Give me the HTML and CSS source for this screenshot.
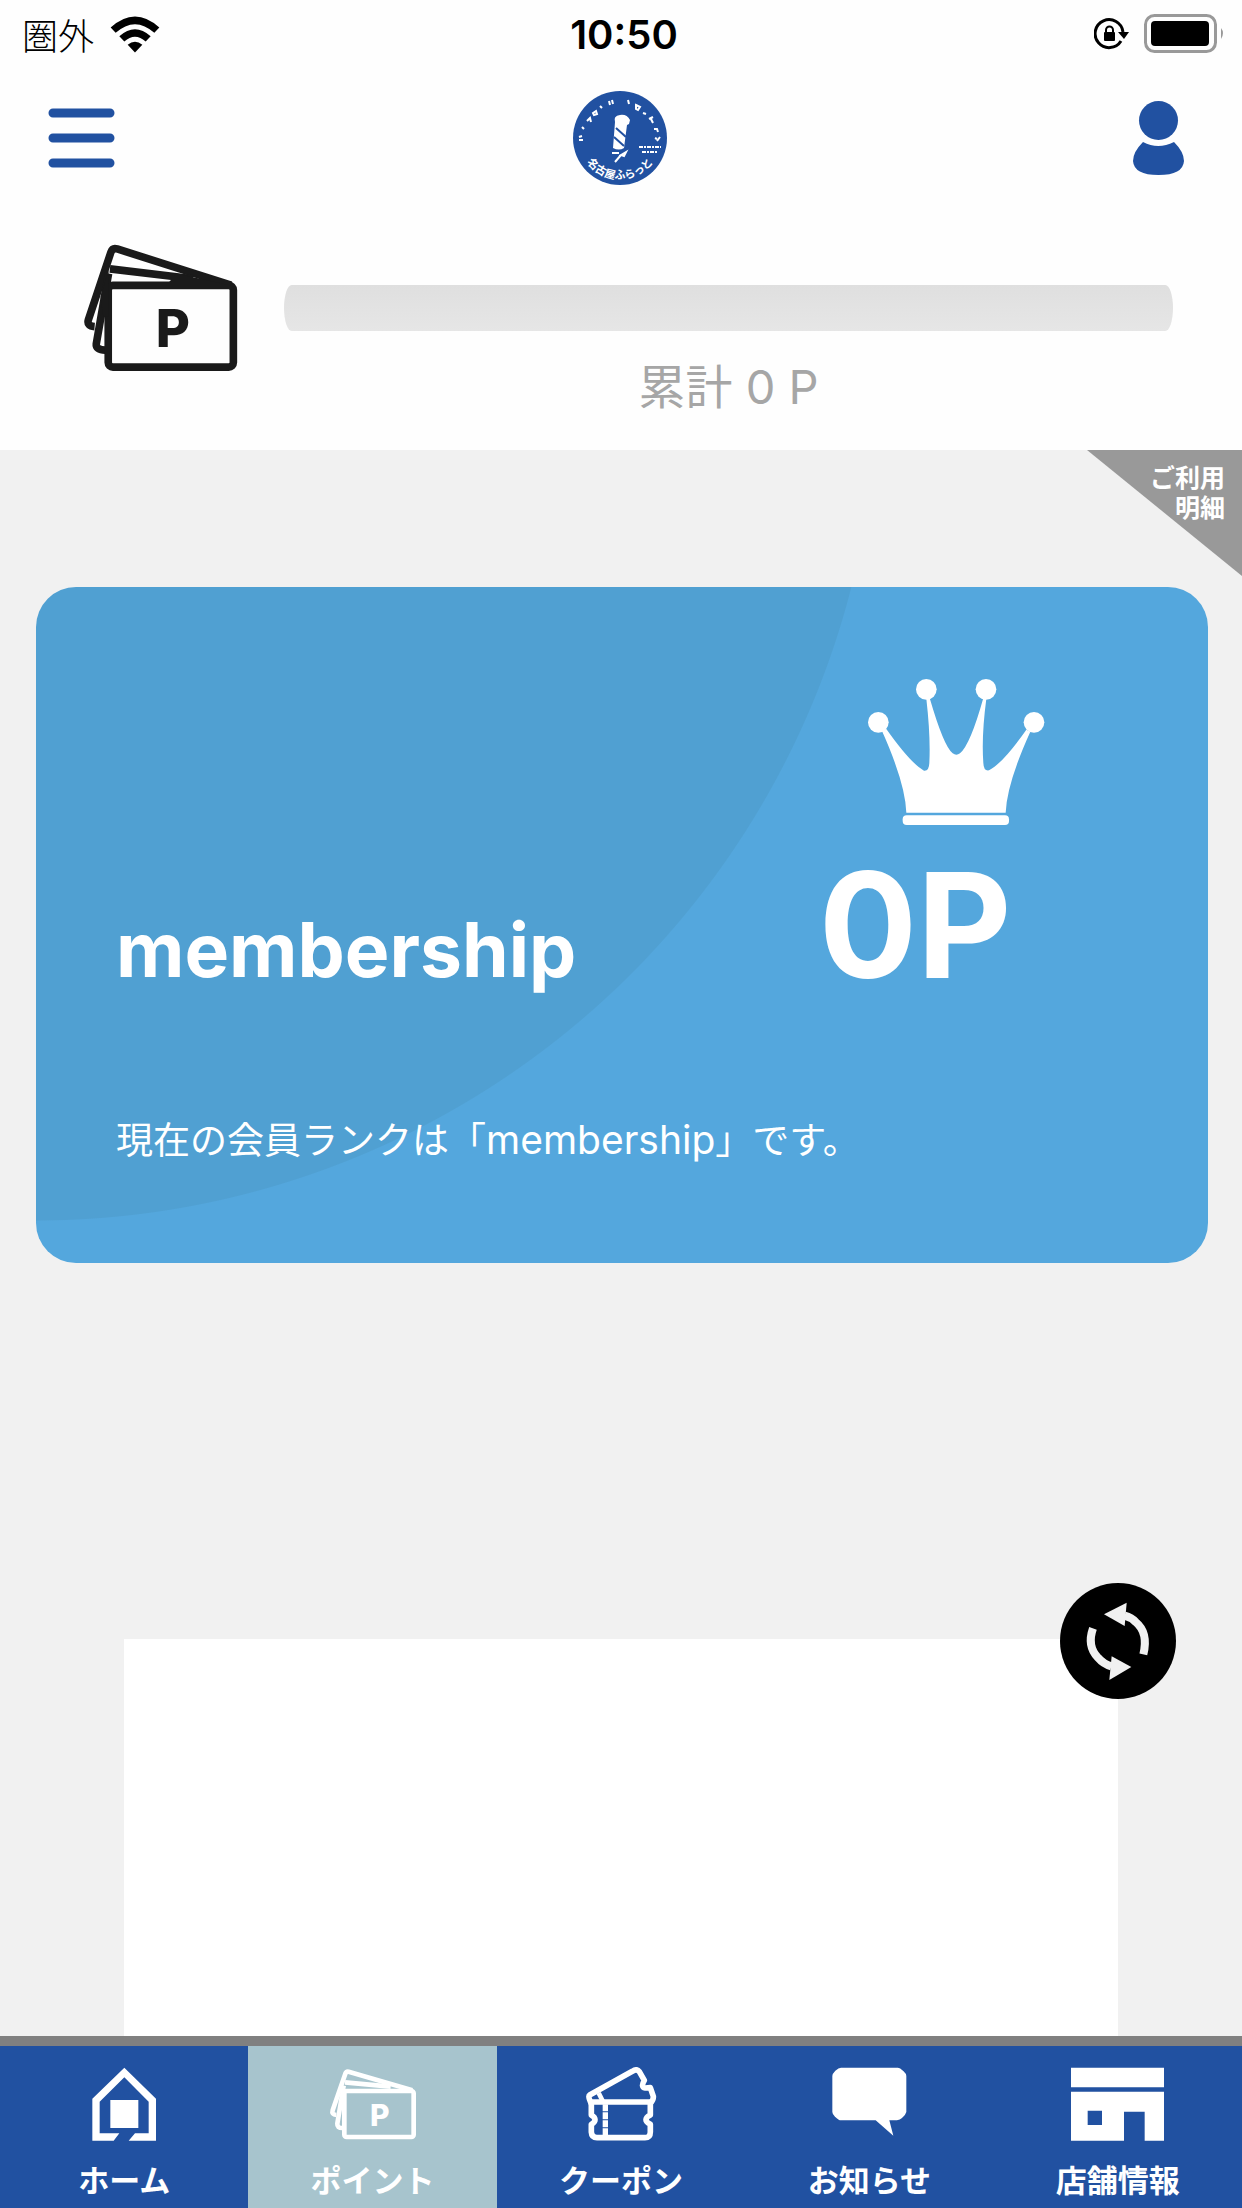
FILE: index.html
```html
<!DOCTYPE html>
<html lang="ja">
<head>
    <meta charset="UTF-8">
    <meta name="viewport" content="width=device-width, initial-scale=1.0">
    <title>ポイント</title>
    <link rel="stylesheet" href="styles.css">
</head>
<body>
    <div class="status-bar">
        <div class="status-left">
            <span class="carrier">圏外</span>
            <svg class="wifi" viewBox="330 44 150 110">
                <path d="M332 78Q405 12 478 78L463 94Q405 42 347 94Z"/>
                <path d="M358 104Q405 62 452 104L437 120Q405 92 373 120Z"/>
                <path d="M383 130Q405 112 427 130L405 153Z"/>
            </svg>
        </div>
        <time class="clock">10:50</time>
        <div class="status-right">
            <svg class="rotation-lock" viewBox="0 0 36 32">
                <path d="M27 23A14 14 0 1 1 29 14" fill="none" stroke="#000" stroke-width="3"/>
                <path d="M24 14h11l-5 7z"/>
                <rect x="10" y="14" width="11" height="9" rx="1"/>
                <path d="M12 15v-3a3.500 3.500 0 0 1 7 0v3" fill="none" stroke="#000" stroke-width="2"/>
            </svg>
            <svg class="battery" viewBox="0 0 82 40">
                <rect x="1.500" y="1.500" width="70" height="36" rx="9" fill="none" stroke="#999" stroke-width="3"/>
                <rect x="7" y="7" width="58" height="25" rx="4"/>
                <path d="M77 14q4 5 0 11z" fill="#999"/>
            </svg>
        </div>
    </div>

    <header class="header">
        <button class="icon-btn" aria-label="メニュー">
            <svg class="menu-icon" viewBox="0 0 67 60">
                <path d="M5 5h57M5 30h57M5 55h57"/>
            </svg>
        </button>
        <a href="#" class="logo" aria-label="トップ">
            <svg viewBox="0 0 94 94">
                <defs>
                    <path id="name-arc" d="M10 65A41 41 0 0 0 84 65"/>
                </defs>
                <circle cx="47" cy="47" r="47" fill="#2151a1"/>
                <!-- lettering round the top edge -->
                <g fill="none" stroke="#fff" stroke-width="2">
                    <path d="M6 49h4M6 46l3-1M9 36l2 2M14 30l3-3 1 4M20 22l3-2 1 3-3 1zM27 15l2 2M36 10l1 4M39 9l1 4"/>
                    <path d="M55 9l1 4M63 14l4 2-2 3-2-1zM70 22l3 1M76 28l4-2M78 28l2 4M81 38h3l1 3M84 50l3-4M82 47l2 1"/>
                </g>
                <path d="M42 31q-2-6 5-7 7-1 10 5l-1 4-2 1-3 23q-5 3-11 0z" fill="#fff"/>
                <path d="M43 37l10 9M41 46l10 9" stroke="#2151a1" stroke-width="2"/>
                <path d="M39 62h7M42 71l6-7M48 64l5-3-2 4z" stroke="#fff" stroke-width="2" fill="none"/>
                <path d="M66 56h22M69 61h15" stroke="#fff" stroke-width="2" stroke-dasharray="4 1 2 1"/>
                <text class="logo-text"><textPath href="#name-arc" startOffset="50%" text-anchor="middle">名古屋ふらっと</textPath></text>
            </svg>
        </a>
        <button class="icon-btn" aria-label="マイページ">
            <svg class="user-icon" viewBox="0 0 51 74">
                <circle cx="25.500" cy="19.500" r="19.500"/>
                <path d="M10 41Q25 49 41 41Q51 51 51 60Q50 74 25.500 74Q1 74 0 60Q0 51 10 41Z"/>
            </svg>
        </button>
    </header>

    <section class="points">
        <svg class="cards-icon" viewBox="72 72 464 384">
            <g fill="none" stroke="#1a1a1a" stroke-width="23" stroke-linejoin="round">
                <path d="M515 195L172 86Q158 82 153 96L85 300Q80 318 104 320"/>
                <path d="M400 176L150 146M146 160L109 372Q107 390 136 391"/>
                <rect x="145" y="196" width="377" height="246" rx="14"/>
            </g>
            <path d="M350 160L515 196H320Z" fill="#1a1a1a"/>
            <path d="M122 230L146 150V290H130Z" fill="#1a1a1a"/>
            <text class="card-letter" x="340" y="381" fill="#1a1a1a">P</text>
        </svg>
        <div class="points-body">
            <div class="progress"></div>
            <p class="total">累計 0 P</p>
        </div>
    </section>

    <main class="main">
        <a href="#" class="history-link"><span>ご利用<br>明細</span></a>

        <div class="rank-card">
            <div class="rank-row">
                <h1 class="rank-name">membership</h1>
                <div class="rank-points">
                    <svg class="crown" viewBox="200 115 534 444" fill="#fff">
                        <circle cx="234" cy="248" r="31"/>
                        <circle cx="378" cy="149" r="31"/>
                        <circle cx="557" cy="149" r="31"/>
                        <circle cx="701" cy="248" r="31"/>
                        <path d="M244 272L258 268Q330 370 371 393Q386 395 387 370Q391 290 378 177L388 175Q430 320 457 341Q468 349 479 341Q510 315 549 175L558 177Q543 290 549 370Q550 395 566 392Q608 370 678 270L690 276Q620 430 616 519H318Q315 430 244 272Z"/>
                        <rect x="307" y="527" width="319" height="29" rx="12"/>
                    </svg>
                    <p class="point-value">0P</p>
                </div>
            </div>
            <p class="rank-text">現在の会員ランクは「<span class="rank-label">membership</span>」です。</p>
        </div>

        <div class="barcode-box">
            <button class="refresh-btn" aria-label="更新">
                <svg viewBox="90 66 348 348">
                    <g fill="none" stroke="#f1f1f1" stroke-width="24">
                        <path d="M340 280Q356 215 317 183Q305 170 284 164"/>
                        <path d="M189 202Q170 255 204 290Q220 309 244 316"/>
                    </g>
                    <path d="M222 160L290 125L284 195Z" fill="#f1f1f1"/>
                    <path d="M304 318L245 286L238 357Z" fill="#f1f1f1"/>
                </svg>
            </button>
        </div>
    </main>

    <nav class="tab-bar">
        <a href="#" class="tab">
            <svg viewBox="273 140 198 222">
                <path d="M358 339H299V244L373 171L446 244V339H405L386 361H468V235L373 142L277 235V361H341Z" fill="#fff"/>
                <rect x="331" y="239" width="84" height="84" fill="#fff"/>
            </svg>
            <span>ホーム</span>
        </a>
        <a href="#" class="tab active">
            <svg viewBox="990 140 264 222">
                <g fill="none" stroke="#fff" stroke-width="14" stroke-linejoin="round">
                    <path d="M1240 210L1049 154Q1042 152 1039 160L1001 270Q997 283 1012 284"/>
                    <path d="M1175 199L1038 186M1034 196L1015 310Q1014 323 1030 323"/>
                    <rect x="1036" y="212" width="208" height="138" rx="7"/>
                </g>
                <text class="tab-letter" x="1142" y="317" fill="#fff">P</text>
            </svg>
            <span>ポイント</span>
        </a>
        <a href="#" class="tab">
            <svg viewBox="314 140 218 222">
                <g fill="none" stroke="#fff" stroke-width="17" stroke-linejoin="round">
                    <path d="M334 252Q321 228 328 224L456 153Q470 144 477 154L492 180Q480 200 495 203L510 202L519 228Q520 240 510 248"/>
                    <path d="M333 245H512M333 245V284Q355 298 333 312V335Q334 352 350 352H494Q510 352 510 335V312Q484 298 510 284V245"/>
                </g>
                <path d="M375 252V348" stroke="#fff" stroke-width="16" stroke-dasharray="21 3"/>
                <path d="M355 218l12 24" stroke="#fff" stroke-width="14"/>
            </svg>
            <span>クーポン</span>
        </a>
        <a href="#" class="tab">
            <svg viewBox="1056 140 224 222">
                <path d="M1083 142H1253Q1260 142 1270 152Q1279 160 1279 167V275Q1277 284 1266 293Q1260 299 1251 300H1228L1240 346L1187 300H1083Q1076 300 1065 289Q1057 282 1057 275V167Q1057 160 1066 151Q1076 142 1083 142Z" fill="#fff"/>
            </svg>
            <span>お知らせ</span>
        </a>
        <a href="#" class="tab">
            <svg viewBox="335 140 279 222">
                <path d="M335 142H614V201H335ZM335 214H614V361H556V274H494V361H335ZM385 271V314H428V271Z" fill="#fff" fill-rule="evenodd"/>
            </svg>
            <span>店舗情報</span>
        </a>
    </nav>
</body>
</html>
```
FILE: styles.css
```css
* {
    box-sizing: border-box;
}

body {
    display: flex;
    flex-direction: column;
    min-height: 100vh;
    margin: 0;
    background-color: #fefefe;
    font-family: Inter, "Noto Sans CJK JP", sans-serif;
}

h1, p {
    margin: 0;
}

a {
    color: inherit;
    text-decoration: none;
}

button {
    padding: 0;
    border: none;
    background: none;
    cursor: pointer;
}

svg {
    display: block;
}

/* Status bar */
.status-bar {
    display: grid;
    grid-template-columns: 1fr auto 1fr;
    align-items: center;
    height: 68px;
    padding: 0 16px 0 22px;
}

.status-left,
.status-right {
    display: flex;
    align-items: center;
    gap: 16px;
}

.status-right {
    justify-content: flex-end;
    gap: 14px;
}

.carrier {
    font-size: 36px;
    font-weight: 300;
}

.wifi {
    width: 50px;
    height: 37px;
}

.clock {
    font-size: 40px;
    font-weight: 600;
}

.rotation-lock {
    width: 36px;
    height: 32px;
}

.battery {
    width: 82px;
    height: 40px;
}

/* Header */
.header {
    display: flex;
    justify-content: space-between;
    align-items: center;
    height: 140px;
    padding: 0 50px 0 48px;
}

.icon-btn {
    width: 67px;
}

.menu-icon {
    width: 67px;
    height: 60px;
    fill: none;
    stroke: #2151a1;
    stroke-width: 9;
    stroke-linecap: round;
}

.logo {
    width: 94px;
}

.logo-text {
    font-size: 11px;
    font-weight: 700;
    fill: #fff;
}

.user-icon {
    width: 51px;
    height: 74px;
    margin: 0 auto;
    fill: #2151a1;
}

/* Points */
.points {
    display: flex;
    gap: 46px;
    padding: 36px 69px 34px 84px;
}

.cards-icon {
    flex: none;
    width: 154px;
    height: 128px;
}

.card-letter,
.tab-letter {
    font-family: Inter, sans-serif;
    font-weight: 800;
    text-anchor: middle;
}

.card-letter {
    font-size: 158px;
}

.tab-letter {
    font-size: 90px;
}

.points-body {
    flex: 1;
    padding-top: 41px;
}

.progress {
    height: 46px;
    border-radius: 10px / 30px;
    background: linear-gradient(#dfdfdf, #e6e6e6);
}

.total {
    margin-top: 27px;
    color: #a6a6a6;
    font-size: 47px;
    line-height: 58px;
    text-align: center;
}

/* Main */
.main {
    position: relative;
    display: flex;
    flex: 1;
    flex-direction: column;
    background-color: #f1f1f1;
}

.history-link {
    position: absolute;
    top: 0;
    right: 0;
    width: 155px;
    height: 126px;
    padding: 13px 17px;
    background-color: #999;
    clip-path: polygon(0 0, 100% 0, 100% 100%);
    color: #fff;
    font-size: 25px;
    font-weight: 700;
    line-height: 30px;
    text-align: right;
}

.rank-card {
    margin: 137px 34px 0 36px;
    padding: 91px 38px 96px 80px;
    border-radius: 40px;
    background: radial-gradient(circle at 0 -208px, #50a0d2 841px, #54a7dd 842px);
    color: #fff;
}

.rank-row {
    display: grid;
    grid-template-columns: 2fr 1fr;
    align-items: end;
}

.rank-name {
    font-size: 75px;
    font-weight: 700;
    line-height: 96px;
}

.crown {
    width: 178px;
    height: 148px;
    margin: 0 0 26px 48px;
}

.point-value {
    font-size: 146px;
    font-weight: 700;
    line-height: 146px;
}

.rank-text {
    margin-top: 116px;
    font-size: 37px;
    line-height: 52px;
    text-spacing-trim: space-all;
}

.rank-label {
    font-size: 39px;
}

.barcode-box {
    position: relative;
    flex: 1;
    min-height: 300px;
    margin: 376px 10% 0;
    background-color: #fff;
}

.refresh-btn {
    position: absolute;
    top: -56px;
    right: -58px;
    width: 116px;
    height: 116px;
    border-radius: 50%;
    background-color: #000;
}

/* Tab bar */
.tab-bar {
    display: flex;
    border-top: 10px solid #808080;
    background-color: #2151a1;
}

.tab {
    display: flex;
    flex: 1;
    flex-direction: column;
    align-items: center;
    gap: 18px;
    padding: 21px 0 5px;
    color: #fff;
    font-size: 31px;
    font-weight: 700;
    line-height: 44px;
}

.tab svg {
    height: 74px;
}

.tab.active {
    background-color: #a7c4cd;
}
```
